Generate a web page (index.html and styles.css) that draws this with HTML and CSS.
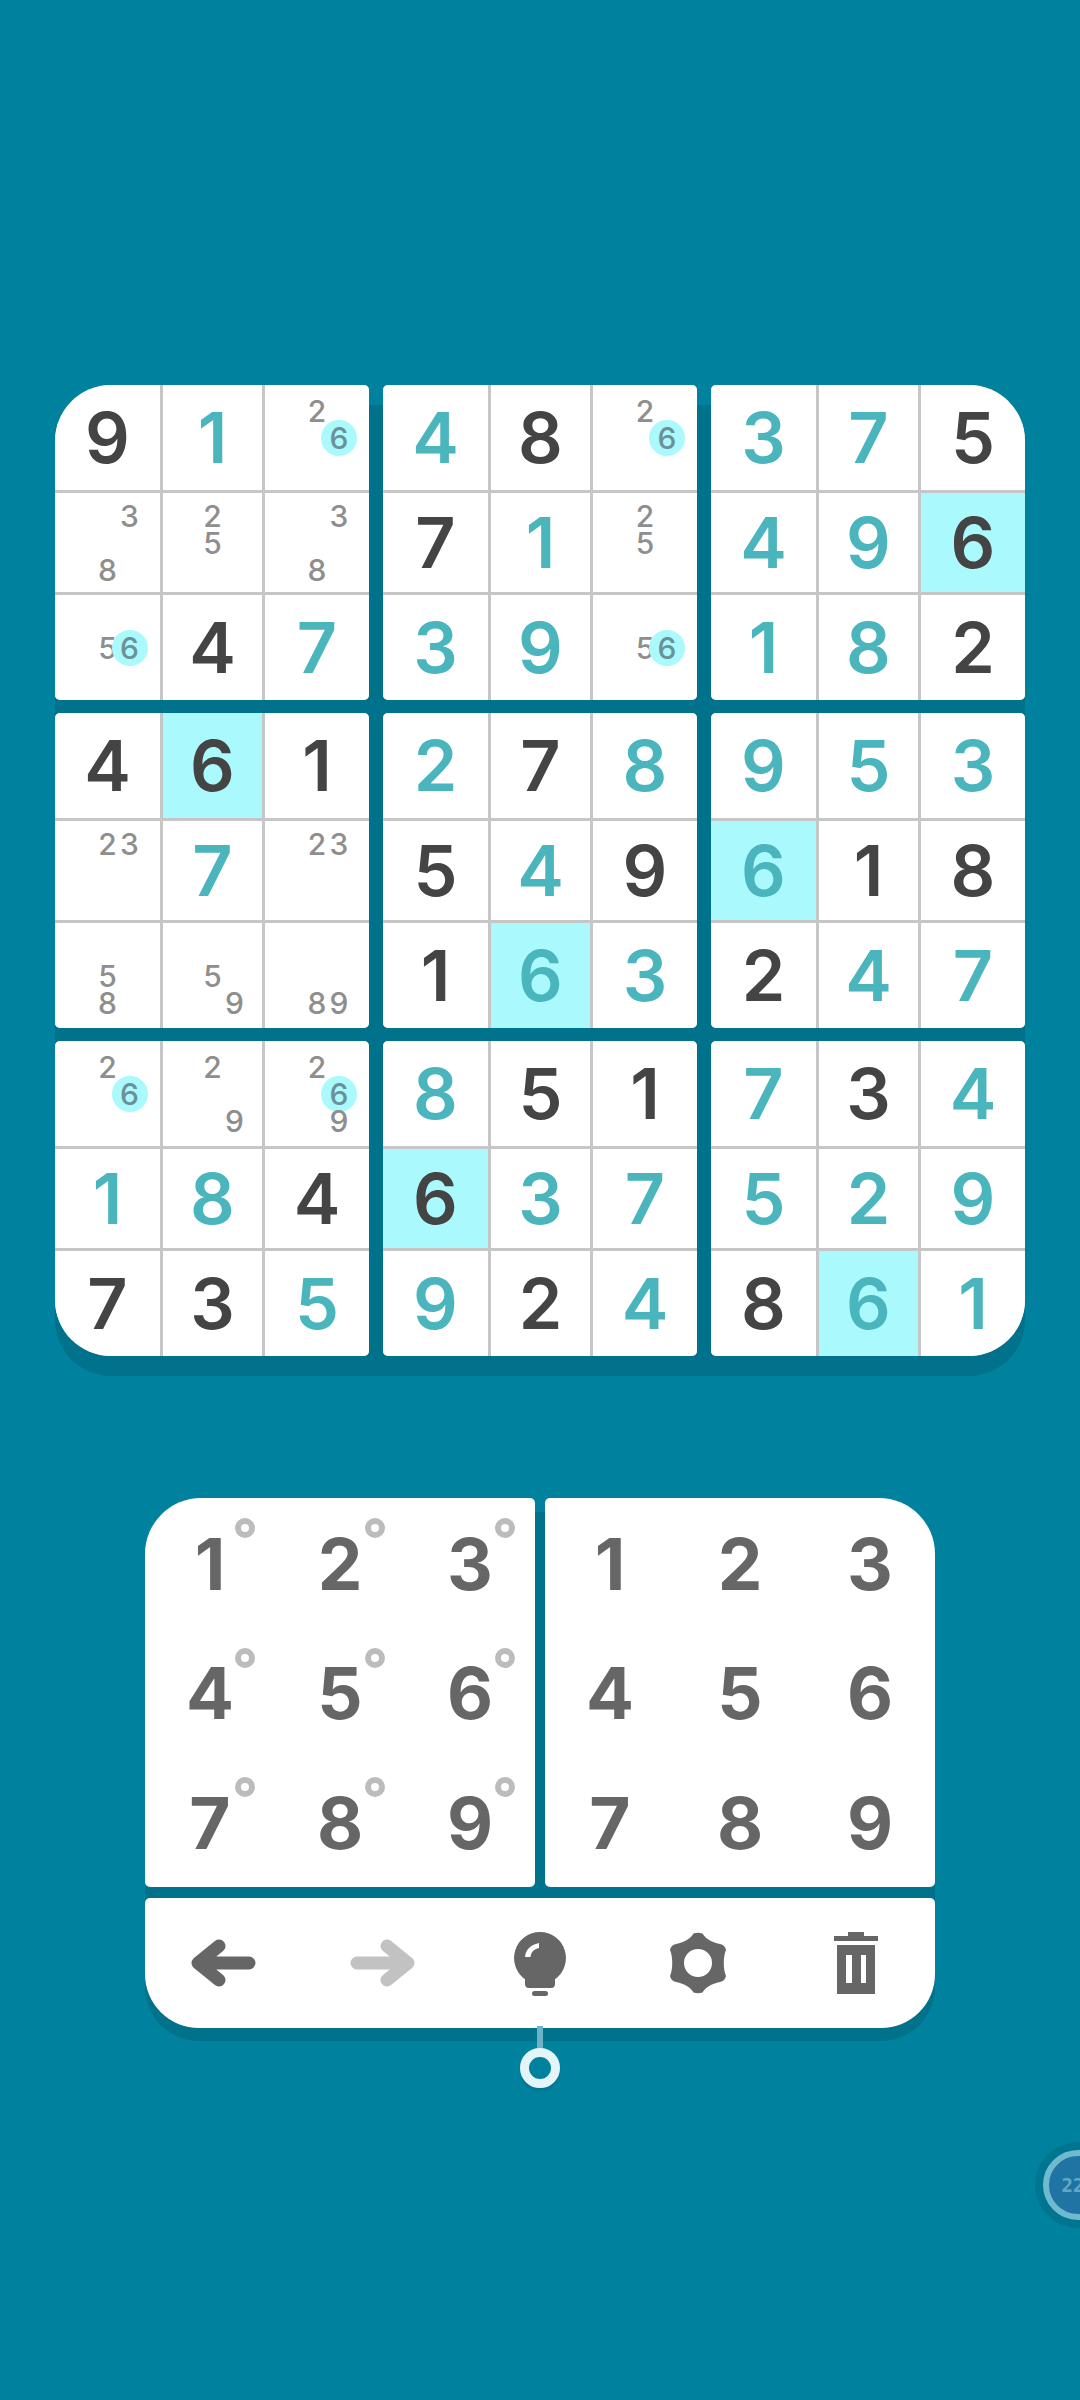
FILE: index.html
```html
<!DOCTYPE html>
<html lang="en">
  <head>
    <meta charset="UTF-8" />
    <meta name="viewport" content="width=device-width, initial-scale=1.0" />
    <title>Sudoku</title>
    <link rel="stylesheet" href="styles.css">
  </head>

  <body>
    <div id="game">
      <div id="board">
        <div class="block cornerTopLeft">
          <div class="cell given">9</div>
          <div class="cell entered">1</div>
          <div class="cell notes"><span class="n2">2</span><span class="n6 match">6</span></div>
          <div class="cell notes"><span class="n3">3</span><span class="n8">8</span></div>
          <div class="cell notes"><span class="n2">2</span><span class="n5">5</span></div>
          <div class="cell notes"><span class="n3">3</span><span class="n8">8</span></div>
          <div class="cell notes"><span class="n5">5</span><span class="n6 match">6</span></div>
          <div class="cell given">4</div>
          <div class="cell entered">7</div>
        </div>
        <div class="block">
          <div class="cell entered">4</div>
          <div class="cell given">8</div>
          <div class="cell notes"><span class="n2">2</span><span class="n6 match">6</span></div>
          <div class="cell given">7</div>
          <div class="cell entered">1</div>
          <div class="cell notes"><span class="n2">2</span><span class="n5">5</span></div>
          <div class="cell entered">3</div>
          <div class="cell entered">9</div>
          <div class="cell notes"><span class="n5">5</span><span class="n6 match">6</span></div>
        </div>
        <div class="block cornerTopRight">
          <div class="cell entered">3</div>
          <div class="cell entered">7</div>
          <div class="cell given">5</div>
          <div class="cell entered">4</div>
          <div class="cell entered">9</div>
          <div class="cell given hit">6</div>
          <div class="cell entered">1</div>
          <div class="cell entered">8</div>
          <div class="cell given">2</div>
        </div>

        <div class="block">
          <div class="cell given">4</div>
          <div class="cell given hit">6</div>
          <div class="cell given">1</div>
          <div class="cell notes"><span class="n2">2</span><span class="n3">3</span></div>
          <div class="cell entered">7</div>
          <div class="cell notes"><span class="n2">2</span><span class="n3">3</span></div>
          <div class="cell notes"><span class="n5">5</span><span class="n8">8</span></div>
          <div class="cell notes"><span class="n5">5</span><span class="n9">9</span></div>
          <div class="cell notes"><span class="n8">8</span><span class="n9">9</span></div>
        </div>
        <div class="block">
          <div class="cell entered">2</div>
          <div class="cell given">7</div>
          <div class="cell entered">8</div>
          <div class="cell given">5</div>
          <div class="cell entered">4</div>
          <div class="cell given">9</div>
          <div class="cell given">1</div>
          <div class="cell entered hit">6</div>
          <div class="cell entered">3</div>
        </div>
        <div class="block">
          <div class="cell entered">9</div>
          <div class="cell entered">5</div>
          <div class="cell entered">3</div>
          <div class="cell entered hit">6</div>
          <div class="cell given">1</div>
          <div class="cell given">8</div>
          <div class="cell given">2</div>
          <div class="cell entered">4</div>
          <div class="cell entered">7</div>
        </div>

        <div class="block cornerBottomLeft">
          <div class="cell notes"><span class="n2">2</span><span class="n6 match">6</span></div>
          <div class="cell notes"><span class="n2">2</span><span class="n9">9</span></div>
          <div class="cell notes"><span class="n2">2</span><span class="n6 match">6</span><span class="n9">9</span></div>
          <div class="cell entered">1</div>
          <div class="cell entered">8</div>
          <div class="cell given">4</div>
          <div class="cell given">7</div>
          <div class="cell given">3</div>
          <div class="cell entered">5</div>
        </div>
        <div class="block">
          <div class="cell entered">8</div>
          <div class="cell given">5</div>
          <div class="cell given">1</div>
          <div class="cell given hit">6</div>
          <div class="cell entered">3</div>
          <div class="cell entered">7</div>
          <div class="cell entered">9</div>
          <div class="cell given">2</div>
          <div class="cell entered">4</div>
        </div>
        <div class="block cornerBottomRight">
          <div class="cell entered">7</div>
          <div class="cell given">3</div>
          <div class="cell entered">4</div>
          <div class="cell entered">5</div>
          <div class="cell entered">2</div>
          <div class="cell entered">9</div>
          <div class="cell given">8</div>
          <div class="cell entered hit">6</div>
          <div class="cell entered">1</div>
        </div>
      </div>

      <div id="controls">
        <div class="pads">
          <div class="pad padLeft">
            <div class="key ringed">1</div>
            <div class="key ringed">2</div>
            <div class="key ringed">3</div>
            <div class="key ringed">4</div>
            <div class="key ringed">5</div>
            <div class="key ringed">6</div>
            <div class="key ringed">7</div>
            <div class="key ringed">8</div>
            <div class="key ringed">9</div>
          </div>
          <div class="pad padRight">
            <div class="key">1</div>
            <div class="key">2</div>
            <div class="key">3</div>
            <div class="key">4</div>
            <div class="key">5</div>
            <div class="key">6</div>
            <div class="key">7</div>
            <div class="key">8</div>
            <div class="key">9</div>
          </div>
        </div>

        <div id="toolbar">
          <div class="tool">
            <svg width="70" height="50" viewBox="0 0 70 50">
              <path d="M60 25H9M30 8 9 25 30 42" fill="none" stroke="#666" stroke-width="13" stroke-linecap="round" stroke-linejoin="round" />
            </svg>
          </div>
          <div class="tool">
            <svg width="70" height="50" viewBox="0 0 70 50">
              <path d="M10 25H61M40 8 61 25 40 42" fill="none" stroke="#c2c2c2" stroke-width="13" stroke-linecap="round" stroke-linejoin="round" />
            </svg>
          </div>
          <div class="tool">
            <svg width="60" height="70" viewBox="0 0 60 70">
              <path d="M30 4a26 26 0 0 1 15 47.200V56a4 4 0 0 1-4 4H19a4 4 0 0 1-4-4v-4.800A26 26 0 0 1 30 4Z" fill="#666" />
              <path d="M15 29c.5-7 5-12 14-14v5c-5 1-8 4-8.500 9Z" fill="#fff" />
              <rect x="22" y="63" width="16" height="5" rx="2.500" fill="#666" />
            </svg>
          </div>
          <div class="tool">
            <svg width="62" height="66" viewBox="-31 -33 62 66">
              <path fill-rule="evenodd" fill="#666" d="M-4.500-29.500Q0-31 4.500-29.500C8-24 13-21 22-19Q27-18 28-13C25-6 25 6 28 13Q27 18 22 19C13 21 8 24 4.500 29.500Q0 31-4.500 29.500C-8 24-13 21-22 19Q-27 18-28 13C-25 6-25-6-28-13Q-27-18-22-19C-13-21-8-24-4.500-29.500ZM14 0A14 14 0 1 0-14 0 14 14 0 1 0 14 0Z" />
            </svg>
          </div>
          <div class="tool">
            <svg width="44" height="62" viewBox="0 0 44 62">
              <path fill-rule="evenodd" fill="#666" d="M14 0H30V4H44V9H0V4H14ZM3 13H41V62H3ZM12 23V51H18V23ZM27 23V51H32V23Z" />
            </svg>
          </div>
        </div>

        <div id="hintPin"></div>
      </div>
    </div>

    <div id="timer"><div class="timerFace">22</div></div>
  </body>
</html>
```

FILE: styles.css
```css
html,
body {
  margin: 0;
  height: 2400px;
  overflow: hidden;
}

body {
  background-color: #00829f;
  font-family: "Inter", "Roboto", sans-serif;
  position: relative;
}

#game {
  display: flex;
  flex-direction: column;
  align-items: center;
  padding-top: 385px;
}

/* board */

#board {
  position: relative;
  z-index: 0;
  display: grid;
  grid-template-columns: repeat(3, 314px);
  grid-template-rows: repeat(3, 315px);
  gap: 13px 14px;
}

#board::before {
  content: "";
  position: absolute;
  z-index: -1;
  top: 20px;
  bottom: -20px;
  left: 0;
  right: 0;
  border-radius: 56px;
  background-color: #00728b;
}

.block {
  display: grid;
  grid-template-columns: 105px 99px 104px;
  grid-template-rows: 105px 99px 105px;
  gap: 3px;
  overflow: hidden;
  border-radius: 5px;
  background-color: #c6c6c6;
}

.cornerTopLeft {
  border-top-left-radius: 56px;
}

.cornerTopRight {
  border-top-right-radius: 56px;
}

.cornerBottomLeft {
  border-bottom-left-radius: 56px;
}

.cornerBottomRight {
  border-bottom-right-radius: 56px;
}

.cell {
  display: flex;
  align-items: center;
  justify-content: center;
  background-color: #fff;
  font-size: 70px;
  font-weight: 600;
  line-height: 1;
}

.given {
  color: #444;
}

.entered {
  color: #4ab5bd;
}

.hit {
  background-color: #a9f9fd;
}

.notes {
  display: grid;
  grid-template-columns: repeat(3, 22px);
  grid-template-rows: repeat(3, 27px);
  justify-content: center;
  align-content: center;
  justify-items: center;
  align-items: center;
  font-size: 30px;
  font-weight: 500;
  color: #8e8e8e;
}

.n2 { grid-area: 1 / 2; }
.n3 { grid-area: 1 / 3; }
.n5 { grid-area: 2 / 2; }
.n6 { grid-area: 2 / 3; }
.n8 { grid-area: 3 / 2; }
.n9 { grid-area: 3 / 3; }

.match {
  display: flex;
  align-items: center;
  justify-content: center;
  flex: none;
  width: 36px;
  height: 36px;
  border-radius: 50%;
  background-color: #a9f9fd;
  color: #6c9097;
}

/* keypad */

#controls {
  position: relative;
  z-index: 0;
  width: 790px;
  margin-top: 142px;
}

#controls::before {
  content: "";
  position: absolute;
  z-index: -1;
  top: 14px;
  bottom: -13px;
  left: 0;
  right: 0;
  border-radius: 56px 56px 54px 54px;
  background-color: #00728b;
}

.pads {
  display: flex;
  gap: 10px;
}

.pad {
  display: grid;
  grid-template-columns: repeat(3, 130px);
  grid-template-rows: repeat(3, 1fr);
  height: 389px;
  border-radius: 5px;
  background-color: #fff;
}

.padLeft {
  border-top-left-radius: 56px;
}

.padRight {
  border-top-right-radius: 56px;
}

.key {
  position: relative;
  display: flex;
  align-items: center;
  justify-content: center;
  padding-top: 3px;
  font-size: 71px;
  font-weight: 700;
  line-height: 1;
  color: #666;
}

.ringed::after {
  content: "";
  position: absolute;
  top: 20px;
  left: 90px;
  width: 8px;
  height: 8px;
  border: 6px solid #bcbcbc;
  border-radius: 50%;
}

/* toolbar */

#toolbar {
  display: grid;
  grid-template-columns: repeat(5, 158px);
  height: 130px;
  margin-top: 11px;
  border-radius: 5px 5px 54px 54px;
  background-color: #fff;
}

.tool {
  display: flex;
  align-items: center;
  justify-content: center;
}

#hintPin {
  position: absolute;
  bottom: -60px;
  left: 375px;
  width: 22px;
  height: 22px;
  border: 9px solid #e4f5f9;
  border-radius: 50%;
  box-shadow: 0 3px 3px rgba(0, 0, 0, 0.1);
}

#hintPin::before {
  content: "";
  position: absolute;
  top: -31px;
  left: 8px;
  width: 6px;
  height: 22px;
  background-color: #6db3c8;
}

/* timer */

#timer {
  position: absolute;
  top: 2142px;
  left: 1035px;
  display: flex;
  align-items: center;
  justify-content: center;
  width: 86px;
  height: 86px;
  border-radius: 50%;
  background-color: #00758f;
}

.timerFace {
  display: flex;
  align-items: center;
  justify-content: center;
  box-sizing: border-box;
  width: 70px;
  height: 70px;
  padding-right: 10px;
  border: 6px solid #70bacf;
  border-radius: 50%;
  background-color: #1f74a3;
  color: #62a8c4;
  font-family: "DejaVu Sans Mono", monospace;
  font-size: 19px;
  font-weight: 700;
}
```
